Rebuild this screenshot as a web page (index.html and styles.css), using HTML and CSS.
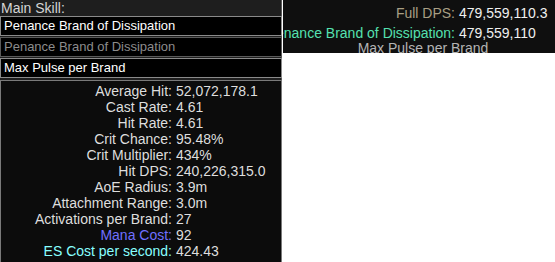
FILE: index.html
```html
<!doctype html>
<html lang="en">
  <head>
    <meta charset="utf-8">
    <title>Main Skill</title>
    <link rel="stylesheet" href="styles.css">
  </head>
  <body>
	<div class="page">
		<div class="sidebar">
			<div class="caption">Main Skill:</div>
			<div class="combo">Penance Brand of Dissipation</div>
			<div class="combo disabled">Penance Brand of Dissipation</div>
			<div class="combo">Max Pulse per Brand</div>
			<div class="stats">
				<div class="label">Average Hit:</div><div class="value">52,072,178.1</div>
				<div class="label">Cast Rate:</div><div class="value">4.61</div>
				<div class="label">Hit Rate:</div><div class="value">4.61</div>
				<div class="label">Crit Chance:</div><div class="value">95.48%</div>
				<div class="label">Crit Multiplier:</div><div class="value">434%</div>
				<div class="label">Hit DPS:</div><div class="value">240,226,315.0</div>
				<div class="label">AoE Radius:</div><div class="value">3.9m</div>
				<div class="label">Attachment Range:</div><div class="value">3.0m</div>
				<div class="label">Activations per Brand:</div><div class="value">27</div>
				<div class="label mana">Mana Cost:</div><div class="value">92</div>
				<div class="label es">ES Cost per second:</div><div class="value">424.43</div>
			</div>
		</div>
		<div class="summary">
			<div class="sum-row">
				<div class="sum-label dps">Full DPS:</div><div class="sum-value">479,559,110.3</div>
			</div>
			<div class="sum-row">
				<div class="sum-label skill">Penance Brand of Dissipation:</div><div class="sum-value">479,559,110</div>
			</div>
			<div class="sum-part">Max Pulse per Brand</div>
		</div>
	</div>
  </body>
</html>
```
FILE: styles.css
```css
body
{
	margin: 0;
	background: #ffffff;
	font-family: "Liberation Sans", Arial, sans-serif;
	font-size: 14px;
}

.page
{
	display: flex;
	align-items: flex-start;
	height: 262px;
	overflow: hidden;
}

.sidebar
{
	width: 282px;
	height: 262px;
	background: #1e1e1e;
	border-right: 1px solid #5a5a5a;
	box-sizing: border-box;
	flex: none;
}

.caption
{
	height: 16px;
	line-height: 16px;
	padding-left: 1px;
	color: #d4d4d4;
}

.combo
{
	height: 20px;
	line-height: 18px;
	box-sizing: border-box;
	margin-bottom: 1px;
	padding-left: 3px;
	background: #000000;
	border: 1px solid #8a8a8a;
	color: #ffffff;
	font-size: 13px;
	width: 282px;
}

.combo.disabled
{
	border-color: #5a5a5a;
	color: #8c8c8c;
}

.stats
{
	margin-top: 2px;
	width: 282px;
	height: 183px;
	box-sizing: border-box;
	background: #0c0c0c;
	border: 1px solid #7a7a7a;
	border-bottom: 0;
	padding-top: 2px;
	display: grid;
	grid-template-columns: 171px auto;
	grid-auto-rows: 16px;
	align-content: start;
	line-height: 16px;
	color: #dedede;
}

.label
{
	text-align: right;
	white-space: nowrap;
}

.value
{
	padding-left: 4px;
	white-space: nowrap;
}

.mana
{
	color: #7070ff;
}

.es
{
	color: #88ffff;
}

.summary
{
	flex: 1;
	height: 53px;
	margin-left: 1px;
	background: #0f0f0f;
	overflow: hidden;
	color: #f0f0f0;
}

.sum-row
{
	display: grid;
	grid-template-columns: 172px auto;
	height: 20px;
	line-height: 20px;
	white-space: nowrap;
}

.sum-row:first-child
{
	margin-top: 3px;
}

.sum-label
{
	display: flex;
	justify-content: flex-end;
}

.sum-value
{
	padding-left: 4px;
}

.dps
{
	color: #a89f84;
}

.skill
{
	color: #55e0b0;
}

.sum-part
{
	text-align: center;
	padding-left: 8px;
	line-height: 14px;
	margin-top: -2px;
	color: #b4b4b4;
}
```
